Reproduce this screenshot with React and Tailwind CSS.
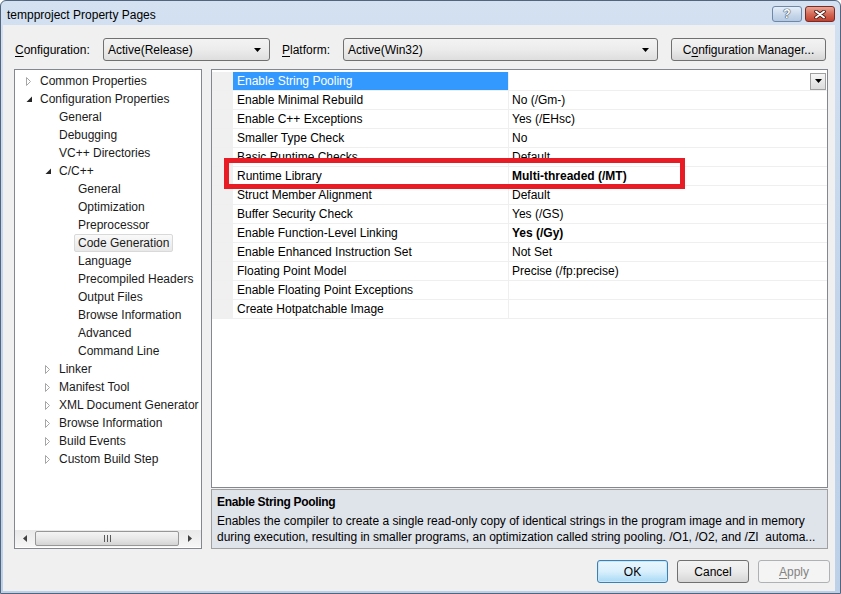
import React from "react";

const treeItems = [
  { t: "Common Properties", l: 0, e: "c" },
  { t: "Configuration Properties", l: 0, e: "o" },
  { t: "General", l: 1 },
  { t: "Debugging", l: 1 },
  { t: "VC++ Directories", l: 1 },
  { t: "C/C++", l: 1, e: "o" },
  { t: "General", l: 2 },
  { t: "Optimization", l: 2 },
  { t: "Preprocessor", l: 2 },
  { t: "Code Generation", l: 2, sel: true },
  { t: "Language", l: 2 },
  { t: "Precompiled Headers", l: 2 },
  { t: "Output Files", l: 2 },
  { t: "Browse Information", l: 2 },
  { t: "Advanced", l: 2 },
  { t: "Command Line", l: 2 },
  { t: "Linker", l: 1, e: "c" },
  { t: "Manifest Tool", l: 1, e: "c" },
  { t: "XML Document Generator", l: 1, e: "c" },
  { t: "Browse Information", l: 1, e: "c" },
  { t: "Build Events", l: 1, e: "c" },
  { t: "Custom Build Step", l: 1, e: "c" },
];

const indent = { 0: "pl-[11px]", 1: "pl-[30px]", 2: "pl-[49px]" };

const rows = [
  { n: "Enable String Pooling", v: "", sel: true },
  { n: "Enable Minimal Rebuild", v: "No (/Gm-)" },
  { n: "Enable C++ Exceptions", v: "Yes (/EHsc)" },
  { n: "Smaller Type Check", v: "No" },
  { n: "Basic Runtime Checks", v: "Default" },
  { n: "Runtime Library", v: "Multi-threaded (/MT)", b: true },
  { n: "Struct Member Alignment", v: "Default" },
  { n: "Buffer Security Check", v: "Yes (/GS)" },
  { n: "Enable Function-Level Linking", v: "Yes (/Gy)", b: true },
  { n: "Enable Enhanced Instruction Set", v: "Not Set" },
  { n: "Floating Point Model", v: "Precise (/fp:precise)" },
  { n: "Enable Floating Point Exceptions", v: "" },
  { n: "Create Hotpatchable Image", v: "" },
];

const Expander = ({ type }) => {
  if (type === "c") {
    return (
      <svg width="6" height="9" viewBox="0 0 6 9">
        <polygon points="0.5,0.5 4.5,4.5 0.5,8.5" fill="#fff" stroke="#a6a6a6" />
      </svg>
    );
  }
  if (type === "o") {
    return (
      <svg width="7" height="7" viewBox="0 0 7 7">
        <polygon points="6,0.5 6,6 0.5,6" fill="#262626" />
      </svg>
    );
  }
  return null;
};

const DownArrow = () => (
  <svg width="7" height="4" viewBox="0 0 7 4">
    <polygon points="0,0 7,0 3.5,4" fill="#000" />
  </svg>
);

const Combo = ({ text, w }) => (
  <div
    className={`${w} h-[23px] flex items-center justify-between pl-[4px] pr-[8px] border border-[#707070] rounded-[3px] bg-gradient-to-b from-[#f3f3f3] via-[#ececec] to-[#dedede]`}
  >
    <span>{text}</span>
    <DownArrow />
  </div>
);

export default function App() {
  return (
    <div className="w-[841px] h-[594px] overflow-hidden bg-white font-['Liberation_Sans',_Arial,_sans-serif] text-[12px] text-black relative">
      <div className="w-[841px] h-[594px] flex flex-col rounded-t-[6px] border border-[#52647e] bg-gradient-to-b from-[#d3e1f1] via-[#c2d5eb] to-[#bcd0e8]">
        {/* title bar */}
        <div className="h-[24px] flex items-start justify-between pl-[6px] pr-[5px]">
          <span className="mt-[5px] text-[12px] text-black">tempproject Property Pages</span>
          <div className="flex gap-[3px] mt-[5px]">
            <div className="w-[30px] h-[16px] rounded-[3px] border border-[#6f87a8] bg-gradient-to-b from-[#e6eef7] via-[#cbdaeb] to-[#b4c9e1] flex items-center justify-center">
              <span className="text-[12px] font-bold leading-none text-white [text-shadow:0_0_1px_#33455f,0_0_1px_#33455f,0_0_1px_#33455f]">?</span>
            </div>
            <div className="w-[30px] h-[16px] rounded-[3px] border border-[#7b2b22] bg-gradient-to-b from-[#e8a595] via-[#d46a57] to-[#c2402f] flex items-center justify-center">
              <svg width="12" height="9" viewBox="0 0 12 9">
                <path d="M2 1.5 L10 7.5 M10 1.5 L2 7.5" stroke="#4a1a14" strokeWidth="3.6" strokeLinecap="round" />
                <path d="M2 1.5 L10 7.5 M10 1.5 L2 7.5" stroke="#fff" strokeWidth="2" strokeLinecap="round" />
              </svg>
            </div>
          </div>
        </div>

        {/* client area */}
        <div className="ml-[2px] w-[832px] flex-1 mb-[2px] bg-[#f0f0f0] flex flex-col pt-[13px] pl-[11px]">
          {/* configuration row */}
          <div className="h-[23px] flex items-center">
            <span className="w-[89px] pl-[1px]">
              <span className="underline underline-offset-2">C</span>onfiguration:
            </span>
            <Combo text="Active(Release)" w="w-[167px]" />
            <span className="ml-[12px] w-[61px]">
              <span className="underline underline-offset-2">P</span>latform:
            </span>
            <Combo text="Active(Win32)" w="w-[315px]" />
            <div className="ml-[13px] w-[155px] h-[23px] flex items-center justify-center border border-[#707070] rounded-[3px] bg-gradient-to-b from-[#f3f3f3] via-[#ebebeb] to-[#d6d6d6]">
              C<span className="underline underline-offset-2">o</span>nfiguration Manager...
            </div>
          </div>

          {/* body */}
          <div className="mt-[8px] h-[480px] flex">
            {/* tree */}
            <div className="w-[188px] h-full border border-[#828790] bg-white flex flex-col">
              <div className="flex-1 pt-[2px] overflow-hidden text-[#1a1a1a]">
                {treeItems.map((it, i) => (
                  <div key={i} className={`h-[18px] flex items-center whitespace-nowrap ${indent[it.l]}`}>
                    <span className="w-[14px] flex items-center">
                      <Expander type={it.e} />
                    </span>
                    {it.sel ? (
                      <span className="ml-[-4px] h-[18px] px-[3px] flex items-center border border-[#d9d9d9] rounded-[2px] bg-gradient-to-b from-[#fafafa] to-[#e8e8e8]">
                        {it.t}
                      </span>
                    ) : (
                      <span>{it.t}</span>
                    )}
                  </div>
                ))}
              </div>
              {/* horizontal scrollbar */}
              <div className="h-[17px] mb-[1px] flex items-center bg-gradient-to-b from-[#e9e9e9] to-[#f6f6f6]">
                <div className="w-[20px] flex justify-center">
                  <svg width="4" height="7" viewBox="0 0 4 7">
                    <polygon points="4,0 4,7 0,3.5" fill="#404040" />
                  </svg>
                </div>
                <div className="w-[144px] h-[15px] rounded-[2px] border border-[#979797] bg-gradient-to-b from-[#f4f4f4] via-[#e8e8e8] to-[#d4d4d4] flex items-center justify-center gap-[2px]">
                  <span className="w-[1px] h-[7px] bg-[#5a5a5a]" />
                  <span className="w-[1px] h-[7px] bg-[#5a5a5a]" />
                  <span className="w-[1px] h-[7px] bg-[#5a5a5a]" />
                </div>
                <div className="flex-1 flex justify-center">
                  <svg width="4" height="7" viewBox="0 0 4 7">
                    <polygon points="0,0 0,7 4,3.5" fill="#404040" />
                  </svg>
                </div>
              </div>
            </div>

            {/* property grid + description */}
            <div className="ml-[9px] w-[617px] h-full flex flex-col">
              <div className="h-[419px] border border-[#828790] bg-white pt-[2px]">
                {rows.map((r, i) => (
                  <div key={i} className="h-[19px] flex border-b border-[#efefef]">
                    <div className="w-[21px] bg-[#f0f0f0]" />
                    <div
                      className={`w-[275px] pl-[4px] flex items-center whitespace-nowrap ${
                        r.sel ? "bg-[#3399ff] text-white" : ""
                      }`}
                    >
                      {r.n}
                    </div>
                    <div className="w-[1px] bg-[#efefef]" />
                    <div className={`flex-1 pl-[3px] flex items-center justify-between ${r.b ? "font-bold" : ""}`}>
                      <span>{r.v}</span>
                      {r.sel && (
                        <div className="mr-[1px] w-[16px] h-[17px] border border-[#a0a0a0] bg-gradient-to-b from-[#f6f6f6] to-[#dcdcdc] flex items-center justify-center">
                          <DownArrow />
                        </div>
                      )}
                    </div>
                  </div>
                ))}
              </div>
              <div className="mt-[1px] h-[60px] border border-[#a0a0a0] bg-[#dfe3ea] pl-[5px] pt-[4px] overflow-hidden">
                <div className="font-bold h-[16px] leading-[16px] tracking-[-0.3px]">Enable String Pooling</div>
                <div className="mt-[3px] leading-[16px] whitespace-nowrap">
                  Enables the compiler to create a single read-only copy of identical strings in the program image and in memory
                </div>
                <div className="leading-[16px] whitespace-nowrap">
                  during execution, resulting in smaller programs, an optimization called string pooling. /O1, /O2, and /ZI&nbsp; automa...
                </div>
              </div>
            </div>
          </div>

          {/* bottom buttons */}
          <div className="mt-[11px] flex justify-end pr-[5px] gap-[9px]">
            <div className="w-[71px] h-[23px] flex items-center justify-center rounded-[3px] border border-[#3c7fb1] bg-gradient-to-b from-[#eaf6fd] via-[#d9f0fc] to-[#a7d9f5] shadow-[inset_0_0_0_1px_#c6e7fb]">
              OK
            </div>
            <div className="w-[72px] h-[23px] flex items-center justify-center rounded-[3px] border border-[#707070] bg-gradient-to-b from-[#f3f3f3] via-[#ebebeb] to-[#d6d6d6]">
              Cancel
            </div>
            <div className="w-[72px] h-[23px] flex items-center justify-center rounded-[3px] border border-[#adb2b5] bg-[#f4f4f4] text-[#838383]">
              <span className="underline underline-offset-2">A</span>pply
            </div>
          </div>
        </div>
      </div>

      {/* red annotation box */}
      <div className="absolute left-[224px] top-[158px] w-[461px] h-[31px] border-[5px] border-[#e81c24]" />
    </div>
  );
}
